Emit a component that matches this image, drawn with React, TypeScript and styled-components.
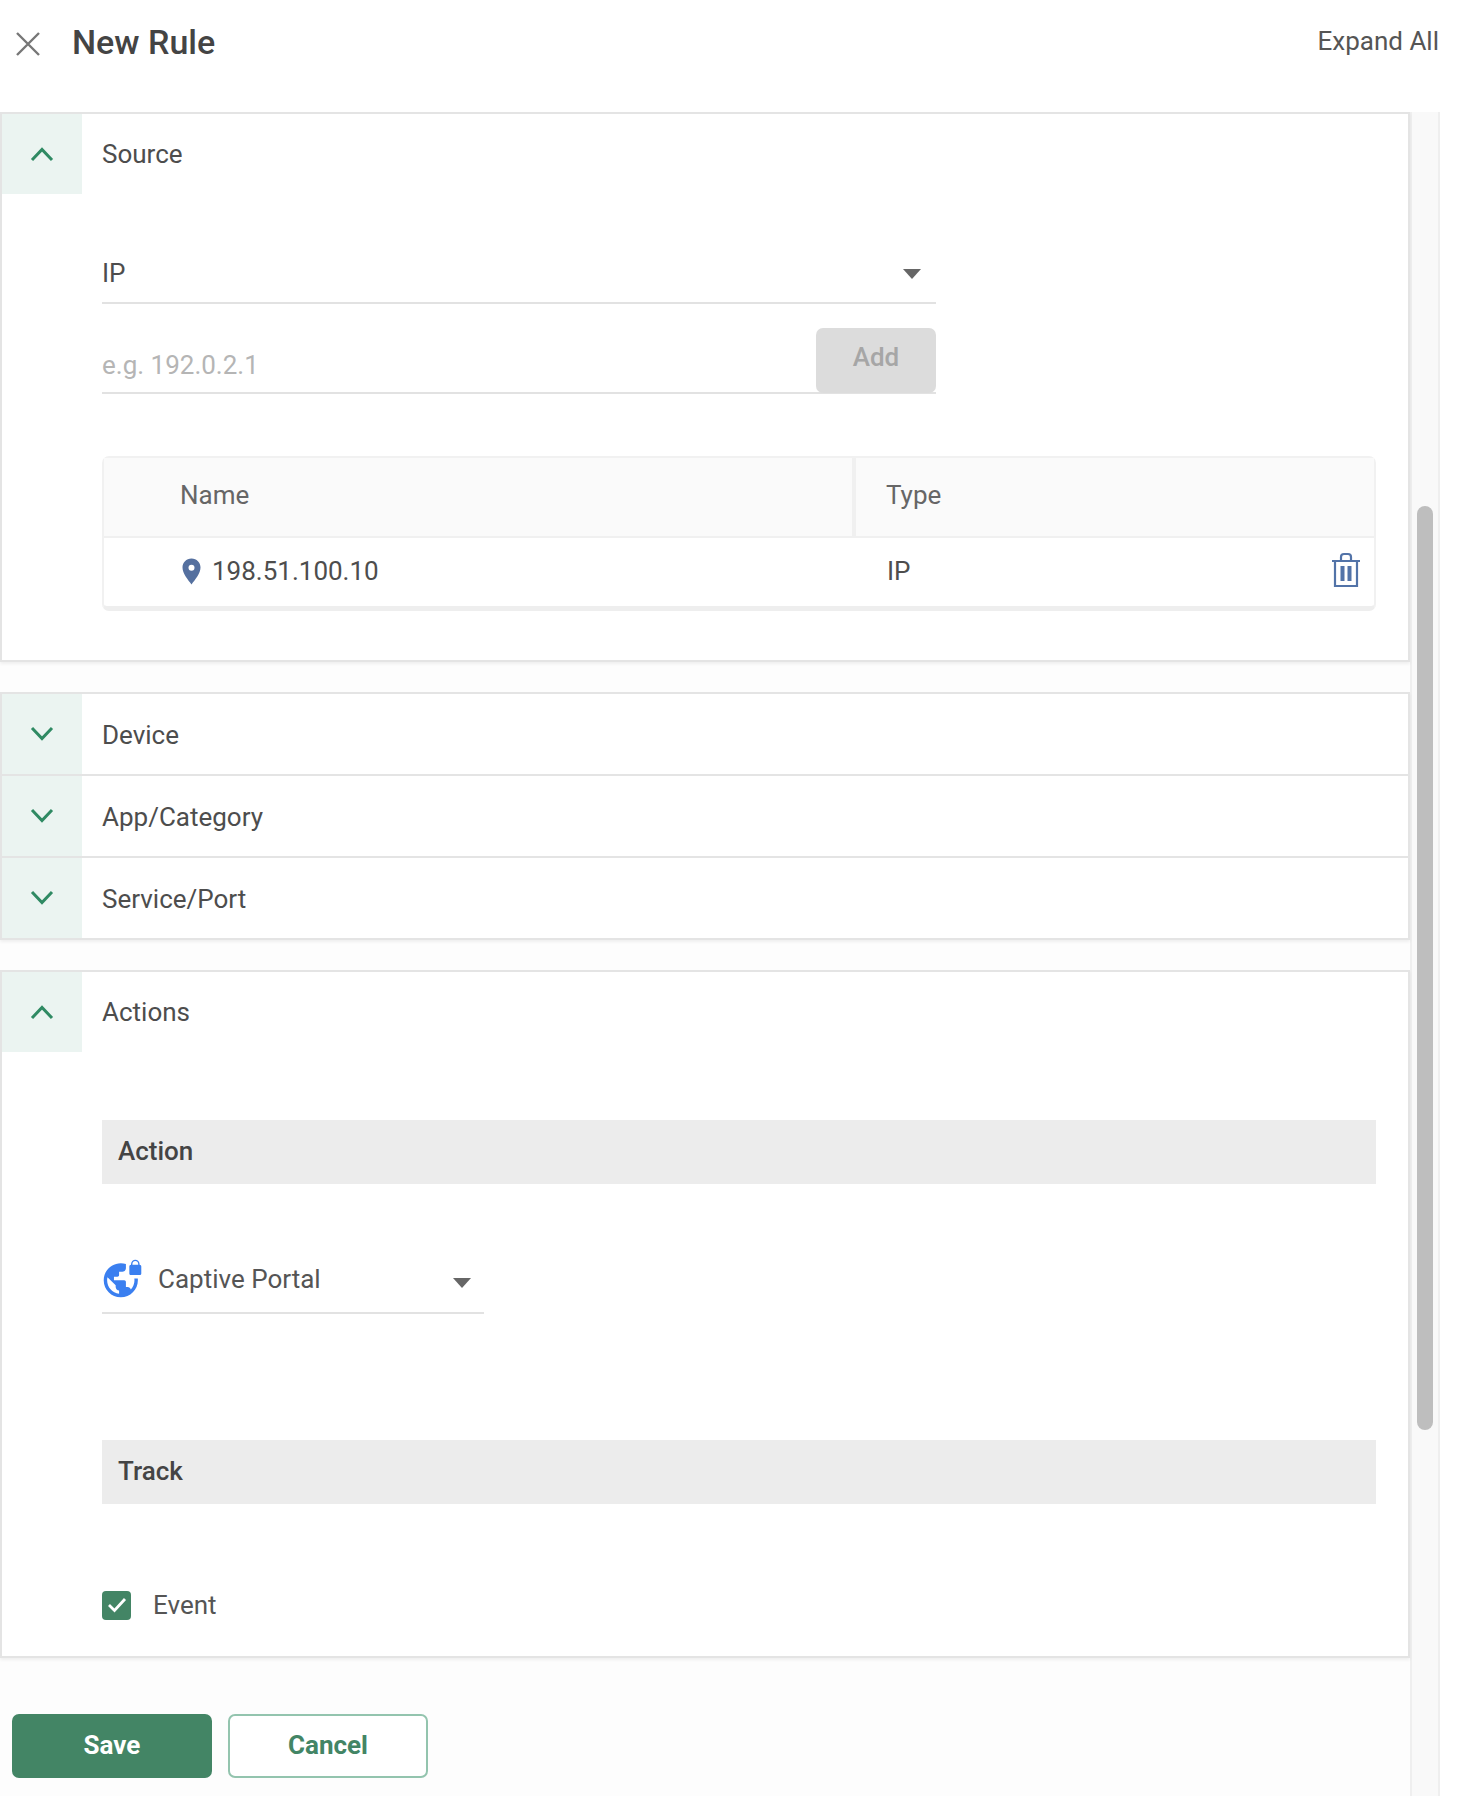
import React from 'react'
import styled, { createGlobalStyle } from 'styled-components'
import { MdVpnLock } from 'react-icons/md'

const GlobalStyle = createGlobalStyle`
  html, body {
    margin: 0;
    padding: 0;
    background: #fff;
  }
  * {
    box-sizing: border-box;
  }
`

const ChevronIcon: React.FC<{ up?: boolean }> = ({ up }) => (
  <svg width='26' height='16' viewBox='0 0 26 16' fill='none'>
    <polyline
      points={up ? '3,14 13,3.5 23,14' : '3,2 13,12.5 23,2'}
      stroke='#2f8a63'
      strokeWidth='3'
    />
  </svg>
)

const CloseIcon = () => (
  <svg width='24' height='24' viewBox='0 0 24 24' fill='none'>
    <path d='M1 1 L23 23 M23 1 L1 23' stroke='#777' strokeWidth='2.4' />
  </svg>
)

const PinIcon = () => (
  <svg width='19' height='27' viewBox='0 0 19 27'>
    <path
      d='M9.5 0.5C4.3 0.5 0.5 4.5 0.5 9.6C0.5 15.4 6 22 9.5 26.5C13 22 18.5 15.4 18.5 9.6C18.5 4.5 14.7 0.5 9.5 0.5Z'
      fill='#55709f'
    />
    <circle cx='9.5' cy='9.8' r='3' fill='#fff' />
  </svg>
)

const TrashIcon = () => (
  <svg width='30' height='36' viewBox='0 0 30 36' fill='none'>
    <path
      d='M1 9 H29 M10 9 V5 Q10 2 13 2 H17 Q20 2 20 5 V9 M4 9 V34 H26 V9'
      stroke='#5273a8'
      strokeWidth='2.2'
    />
    <rect x='9.5' y='14' width='4' height='15' fill='#5273a8' />
    <rect x='16.5' y='14' width='4' height='15' fill='#5273a8' />
  </svg>
)

const CheckIcon = () => (
  <svg width='20' height='16' viewBox='0 0 20 16' fill='none'>
    <polyline points='2,8 7.5,13.5 18,2' stroke='#fff' strokeWidth='2.8' />
  </svg>
)

const App: React.FC = () => {
  return (
    <Page>
      <GlobalStyle />
      <Header>
        <HeaderLeft>
          <CloseButton>
            <CloseIcon />
          </CloseButton>
          <Title>New Rule</Title>
        </HeaderLeft>
        <ExpandAll>Expand All</ExpandAll>
      </Header>
      <Body>
        <Main>
          <Card>
            <SectionRow>
              <Toggle>
                <ChevronIcon up />
              </Toggle>
              <SectionTitle>Source</SectionTitle>
            </SectionRow>
            <SourceBody>
              <SelectField $width={834}>
                <FieldText>IP</FieldText>
                <Caret />
              </SelectField>
              <InputRow>
                <Placeholder>e.g. 192.0.2.1</Placeholder>
                <AddButton>Add</AddButton>
              </InputRow>
              <Table>
                <TableHead>
                  <HeadCell $first>Name</HeadCell>
                  <HeadCell>Type</HeadCell>
                </TableHead>
                <TableRow>
                  <NameCell>
                    <PinIcon />
                    198.51.100.10
                  </NameCell>
                  <TypeCell>
                    IP
                    <TrashButton>
                      <TrashIcon />
                    </TrashButton>
                  </TypeCell>
                </TableRow>
              </Table>
            </SourceBody>
          </Card>

          <Card>
            {['Device', 'App/Category', 'Service/Port'].map((name, i) => (
              <SectionRow key={name} $divided={i > 0}>
                <Toggle>
                  <ChevronIcon />
                </Toggle>
                <SectionTitle $collapsed>{name}</SectionTitle>
              </SectionRow>
            ))}
          </Card>

          <Card>
            <SectionRow>
              <Toggle>
                <ChevronIcon up />
              </Toggle>
              <SectionTitle>Actions</SectionTitle>
            </SectionRow>
            <ActionsBody>
              <GroupBar>Action</GroupBar>
              <ActionSelect $width={382}>
                <MdVpnLock size={41} color='#3a7ff0' />
                <ActionText>Captive Portal</ActionText>
                <Caret />
              </ActionSelect>
              <TrackBar>Track</TrackBar>
              <CheckRow>
                <CheckBox>
                  <CheckIcon />
                </CheckBox>
                <CheckLabel>Event</CheckLabel>
              </CheckRow>
            </ActionsBody>
          </Card>

          <Footer>
            <SaveButton>Save</SaveButton>
            <CancelButton>Cancel</CancelButton>
          </Footer>
        </Main>
        <ScrollTrack>
          <ScrollThumb />
        </ScrollTrack>
      </Body>
    </Page>
  )
}

const Page = styled.div`
  width: 1466px;
  height: 1808px;
  background: #fff;
  color: #4a4a4a;
  font-family: Roboto, 'Liberation Sans', sans-serif;
  overflow: hidden;
`

const Header = styled.header`
  height: 112px;
  display: flex;
  justify-content: space-between;
  padding: 0 27px 0 16px;
`

const HeaderLeft = styled.div`
  display: flex;
  align-items: center;
  height: 86px;
`

const CloseButton = styled.div`
  display: flex;
  width: 56px;
  margin-top: 2px;
`

const Title = styled.h1`
  margin: -2px 0 0;
  font-size: 34px;
  font-weight: 500;
  color: #444;
`

const ExpandAll = styled.div`
  font-size: 26px;
  line-height: 82px;
  color: #555;
`

const Body = styled.div`
  display: flex;
  align-items: flex-start;
`

const Main = styled.main`
  width: 1412px;
  height: 1684px;
  border-right: 2px solid #efefef;
  background: #fdfdfd;
`

const Card = styled.section`
  width: 1410px;
  background: #fff;
  border: 2px solid #e4e4e4;
  box-shadow: 0 2px 3px rgba(0, 0, 0, 0.06);
  margin-bottom: 30px;
`

const SectionRow = styled.div<{ $divided?: boolean }>`
  display: flex;
  align-items: center;
  height: ${props => (props.$divided ? '82px' : '80px')};
  border-top: ${props => (props.$divided ? '2px solid #e4e4e4' : 'none')};
`

const Toggle = styled.div`
  width: 80px;
  height: 100%;
  background: #ebf4f1;
  display: flex;
  align-items: center;
  justify-content: center;
`

const SectionTitle = styled.div<{ $collapsed?: boolean }>`
  margin-left: 20px;
  margin-top: ${props => (props.$collapsed ? '2px' : '0')};
  font-size: 26px;
  color: #4d4d4d;
`

const SourceBody = styled.div`
  padding: 70px 32px 49px 100px;
`

const SelectField = styled.div<{ $width: number }>`
  width: ${props => props.$width}px;
  height: 40px;
  border-bottom: 2px solid #e2e2e2;
  display: flex;
  align-items: flex-start;
  justify-content: space-between;
  padding-right: 15px;
`

const FieldText = styled.div`
  font-size: 26px;
  line-height: 20px;
  margin-top: -1px;
  color: #4d4d4d;
`

const Caret = styled.div`
  width: 0;
  height: 0;
  margin-top: 5px;
  border-left: 9px solid transparent;
  border-right: 9px solid transparent;
  border-top: 10px solid #666;
`

const InputRow = styled.div`
  width: 834px;
  height: 66px;
  margin-top: 24px;
  border-bottom: 2px solid #e2e2e2;
  display: flex;
  justify-content: space-between;
`

const Placeholder = styled.div`
  font-size: 26px;
  color: #b5b5b5;
  align-self: flex-end;
  line-height: 30px;
  padding-bottom: 12px;
`

const AddButton = styled.div`
  width: 120px;
  height: 65px;
  background: #dcdcdc;
  border-radius: 7px;
  color: #a6a6a6;
  font-size: 26px;
  font-weight: 500;
  text-align: center;
  line-height: 59px;
`

const Table = styled.div`
  width: 1274px;
  margin-top: 62px;
  border: 2px solid #f1f1f1;
  border-bottom: 5px solid #eeeeee;
  border-radius: 7px;
`

const TableHead = styled.div`
  display: grid;
  grid-template-columns: 752px 1fr;
  height: 80px;
  background: #fafafa;
  border-bottom: 2px solid #f0f0f0;
`

const HeadCell = styled.div<{ $first?: boolean }>`
  display: flex;
  align-items: center;
  padding-bottom: 5px;
  font-size: 26px;
  color: #666;
  padding-left: ${props => (props.$first ? '76px' : '30px')};
  border-right: ${props => (props.$first ? '4px solid #f0f0f0' : 'none')};
`

const TableRow = styled.div`
  display: grid;
  grid-template-columns: 752px 1fr;
  height: 68px;
  padding-bottom: 2px;
`

const NameCell = styled.div`
  display: flex;
  align-items: center;
  gap: 11px;
  padding-left: 78px;
  font-size: 26px;
  color: #4d4d4d;
`

const TypeCell = styled.div`
  display: flex;
  align-items: center;
  justify-content: space-between;
  padding: 0 13px 0 31px;
  font-size: 26px;
  color: #4d4d4d;
`

const TrashButton = styled.div`
  display: flex;
  margin-top: -3px;
`

const ActionsBody = styled.div`
  padding: 68px 32px 36px 100px;
`

const GroupBar = styled.div`
  height: 64px;
  width: 1274px;
  background: #ececec;
  padding-left: 16px;
  font-size: 26px;
  font-weight: 500;
  line-height: 62px;
  color: #444;
`

const ActionSelect = styled.div<{ $width: number }>`
  width: ${props => props.$width}px;
  height: 56px;
  margin-top: 74px;
  border-bottom: 2px solid #e2e2e2;
  display: flex;
  align-items: flex-start;
  padding-right: 13px;

  ${Caret} {
    margin-top: 20px;
    margin-left: auto;
  }
`

const ActionText = styled.div`
  margin-left: 15px;
  margin-top: 1px;
  font-size: 26px;
  line-height: 40px;
  color: #555;
`

const TrackBar = styled(GroupBar)`
  margin-top: 126px;
`

const CheckRow = styled.div`
  display: flex;
  align-items: center;
  gap: 22px;
  margin-top: 86px;
`

const CheckBox = styled.div`
  width: 29px;
  height: 29px;
  background: #438565;
  border-radius: 4px;
  display: flex;
  align-items: center;
  justify-content: center;
`

const CheckLabel = styled.div`
  font-size: 26px;
  color: #555;
`

const Footer = styled.div`
  display: flex;
  gap: 16px;
  margin-top: 56px;
  padding-left: 12px;
`

const SaveButton = styled.div`
  width: 200px;
  height: 64px;
  background: #438565;
  border-radius: 7px;
  color: #fff;
  font-size: 26px;
  font-weight: 700;
  text-align: center;
  line-height: 62px;
`

const CancelButton = styled.div`
  width: 200px;
  height: 64px;
  background: #fff;
  border: 2px solid #93c4ae;
  border-radius: 7px;
  color: #438565;
  font-size: 26px;
  font-weight: 700;
  text-align: center;
  line-height: 58px;
`

const ScrollTrack = styled.div`
  width: 28px;
  height: 1684px;
  background: #f9f9f9;
  border-right: 2px solid #efefef;
  padding: 394px 4px 0 5px;
`

const ScrollThumb = styled.div`
  width: 16px;
  height: 924px;
  background: #bebebe;
  border-radius: 8px;
`

export default App
